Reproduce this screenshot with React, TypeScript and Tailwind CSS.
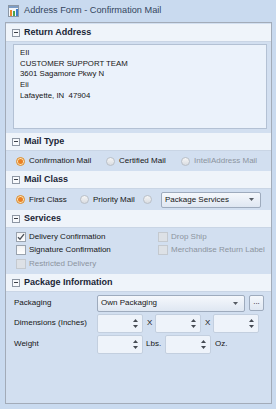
import React from 'react'

const Minus = () => (
  <span className="w-[8px] h-[8px] border border-[#8d96a3] bg-[#f7f9fc] flex items-center justify-center shrink-0">
    <span className="w-[4px] h-[1px] bg-[#3a3f47]" />
  </span>
)

const Header = ({ title }: { title: string }) => (
  <div className="h-[18px] bg-[#eff4fa] border-b border-[#c9d5e5] flex items-center gap-[4px] pl-[6px] shrink-0">
    <Minus />
    <span className="text-[9px] font-bold text-[#1a2536]">{title}</span>
  </div>
)

const Radio = ({ checked }: { checked?: boolean }) =>
  checked ? (
    <span className="w-[9px] h-[9px] rounded-full border border-[#d7892d] bg-[#fbe2b3] flex items-center justify-center shrink-0">
      <span className="w-[5px] h-[5px] rounded-full bg-[#ea7f22]" />
    </span>
  ) : (
    <span className="w-[9px] h-[9px] rounded-full border border-[#b9bfc7] bg-gradient-to-b from-[#f6f6f6] to-[#d9dce1] shrink-0" />
  )

const Check = ({ checked, disabled }: { checked?: boolean; disabled?: boolean }) => (
  <span
    className={
      disabled
        ? 'w-[10px] h-[10px] border border-[#c4c9cf] bg-[#dde1e6] shrink-0'
        : 'w-[10px] h-[10px] border border-[#9aa3ae] bg-gradient-to-b from-[#f0f1f3] to-[#ffffff] shrink-0 flex items-center justify-center'
    }
  >
    {checked && (
      <svg width="8" height="8" viewBox="0 0 8 8">
        <path d="M1 4.2 L3 6.2 L7 1.2" fill="none" stroke="#4b5059" strokeWidth="1.3" />
      </svg>
    )}
  </span>
)

const Arrow = () => (
  <svg width="5" height="3" viewBox="0 0 5 3" className="shrink-0">
    <path d="M0 0 H5 L2.5 3 Z" fill="#555b63" />
  </svg>
)

const Spin = ({ w }: { w: string }) => (
  <div className={`${w} h-[19px] bg-[#eef3fa] border border-[#c3cfdf] rounded-[2px] flex items-center justify-end pr-[4px]`}>
    <svg width="5" height="9" viewBox="0 0 5 9">
      <path d="M0 3 H5 L2.5 0 Z" fill="#454a52" />
      <path d="M0 6 H5 L2.5 9 Z" fill="#454a52" />
    </svg>
  </div>
)

export default function App() {
  return (
    <div className="w-[276px] h-[409px] bg-[#c9daef] font-['Liberation_Sans',Arial,sans-serif] text-[#161616] flex flex-col overflow-hidden">
      <div className="h-[22px] flex items-center gap-[5px] pl-[8px] shrink-0">
        <svg width="11" height="12" viewBox="0 0 11 12">
          <rect x="0.5" y="0.5" width="10" height="11" fill="#f3f6fa" stroke="#8b97a6" />
          <rect x="1" y="1" width="9" height="2" fill="#7d9cc4" />
          <rect x="2" y="5" width="2" height="6" fill="#e8862a" />
          <rect x="5" y="6" width="2" height="5" fill="#4aa34a" />
          <rect x="8" y="4" width="2" height="7" fill="#3d7ec9" />
        </svg>
        <span className="text-[9.2px] text-[#34465e]">Address Form - Confirmation Mail</span>
      </div>

      <div className="ml-[5px] w-[267px] h-[382px] border border-[#a2abb8] bg-[#d2dff0] flex flex-col">
        <div className="mt-[1px]">
          <Header title="Return Address" />
        </div>
        <div className="h-[91px] pl-[7px] pr-[4px] pt-[2px] shrink-0">
          <div className="h-[85px] border border-[#b3c1d4] bg-[#ebf2fb] pl-[6px] pt-[3px] text-[7.8px] leading-[10.7px]">
            <div>EII</div>
            <div>CUSTOMER SUPPORT TEAM</div>
            <div>3601 Sagamore Pkwy N</div>
            <div>Eii</div>
            <div>Lafayette, IN&nbsp; 47904</div>
          </div>
        </div>

        <Header title="Mail Type" />
        <div className="h-[20px] flex items-center pl-[10px] text-[8px] shrink-0">
          <div className="w-[90px] flex items-center gap-[4px]">
            <Radio checked />
            <span>Confirmation Mail</span>
          </div>
          <div className="w-[75px] flex items-center gap-[4px]">
            <Radio />
            <span>Certified Mail</span>
          </div>
          <div className="flex items-center gap-[4px] text-[#8c949e]">
            <Radio />
            <span>IntellAddress Mail</span>
          </div>
        </div>

        <Header title="Mail Class" />
        <div className="h-[21px] flex items-center pl-[10px] text-[8px] shrink-0">
          <div className="w-[64px] flex items-center gap-[4px]">
            <Radio checked />
            <span>First Class</span>
          </div>
          <div className="w-[63px] flex items-center gap-[4px]">
            <Radio />
            <span>Priority Mail</span>
          </div>
          <Radio />
          <div className="ml-[9px] w-[100px] h-[16px] border border-[#9eabbd] rounded-[2px] bg-gradient-to-b from-[#f5f8fc] to-[#dfe7f2] flex items-center justify-between pl-[3px] pr-[6px]">
            <span>Package Services</span>
            <Arrow />
          </div>
        </div>

        <Header title="Services" />
        <div className="h-[46px] pl-[10px] pt-[2px] text-[8px] flex shrink-0">
          <div className="w-[142px] flex flex-col">
            <div className="h-[13.5px] flex items-center gap-[3px]">
              <Check checked />
              <span>Delivery Confirmation</span>
            </div>
            <div className="h-[13.5px] flex items-center gap-[3px]">
              <Check />
              <span>Signature Confirmation</span>
            </div>
            <div className="h-[13.5px] flex items-center gap-[3px] text-[#8c949e]">
              <Check disabled />
              <span>Restricted Delivery</span>
            </div>
          </div>
          <div className="flex flex-col text-[#8c949e]">
            <div className="h-[13.5px] flex items-center gap-[3px]">
              <Check disabled />
              <span>Drop Ship</span>
            </div>
            <div className="h-[13.5px] flex items-center gap-[3px] whitespace-nowrap">
              <Check disabled />
              <span>Merchandise Return Label</span>
            </div>
          </div>
        </div>

        <Header title="Package Information" />
        <div className="pl-[8px] pt-[2px] text-[8px] flex flex-col gap-[1px]">
          <div className="h-[18px] flex items-center">
            <span className="w-[83px]">Packaging</span>
            <div className="w-[148px] h-[17px] border border-[#9eabbd] rounded-[2px] bg-gradient-to-b from-[#f5f8fc] to-[#dfe7f2] flex items-center justify-between pl-[3px] pr-[6px]">
              <span>Own Packaging</span>
              <Arrow />
            </div>
            <div className="ml-[4px] w-[15px] h-[16px] border border-[#9eabbd] rounded-[2px] bg-gradient-to-b from-[#f5f8fc] to-[#dfe7f2] flex items-center justify-center leading-none pb-[2px]">
              ...
            </div>
          </div>
          <div className="h-[20px] flex items-center">
            <span className="w-[83px]">Dimensions (Inches)</span>
            <Spin w="w-[46px]" />
            <span className="w-[12px] pl-[4px]">X</span>
            <Spin w="w-[46px]" />
            <span className="w-[12px] pl-[4px]">X</span>
            <Spin w="w-[46px]" />
          </div>
          <div className="h-[20px] flex items-center">
            <span className="w-[83px]">Weight</span>
            <Spin w="w-[46px]" />
            <span className="w-[22px] pl-[3px]">Lbs.</span>
            <Spin w="w-[46px]" />
            <span className="pl-[4px]">Oz.</span>
          </div>
        </div>
      </div>
    </div>
  )
}
